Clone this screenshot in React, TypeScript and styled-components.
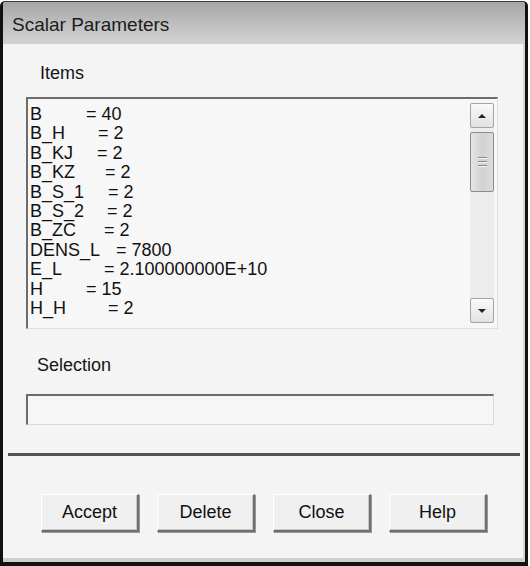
import React from "react";
import styled, { createGlobalStyle } from "styled-components";

const Global = createGlobalStyle`
  html, body { margin: 0; padding: 0; background: #ffffff; }
  body { font-family: "Liberation Sans", Arial, sans-serif; }
  * { box-sizing: border-box; }
`;

const Page = styled.div`
  width: 530px;
  height: 566px;
  padding: 1px 2px 0 0;
  background: #ffffff;
`;

const Window = styled.div`
  width: 528px;
  height: 565px;
  border-top: 1px solid #3a3a3a;
  border-left: 3px solid #111;
  border-right: 3px solid #111;
  border-bottom: 4px solid #111;
  border-top-left-radius: 5px;
  border-top-right-radius: 5px;
  display: flex;
  flex-direction: column;
  background: #f4f4f4;
  overflow: hidden;
  box-shadow: inset -2px 0 0 #d4d4d4, inset 0 -4px 0 #cfcfcf;
`;

const TitleBar = styled.div`
  height: 42px;
  flex: none;
  display: flex;
  align-items: center;
  padding: 3px 0 0 9px;
  background: linear-gradient(#a6a6a6, #c2c2c2 60%, #d2d2d2);
  font-size: 19px;
  color: #1c1c1c;
`;

const Body = styled.div`
  flex: 1;
  display: flex;
  flex-direction: column;
  padding: 0 3px 0 0;
`;

const Label = styled.div<{ $indent: number; $top: number }>`
  margin: ${(p) => p.$top}px 0 0 ${(p) => p.$indent}px;
  font-size: 18px;
  line-height: 20px;
  color: #151515;
`;

const ListBox = styled.div`
  margin: 14px 0 0 23px;
  width: 472px;
  height: 232px;
  display: flex;
  background: #f7f7f7;
  border-top: 2px solid #6c6c6c;
  border-left: 2px solid #6c6c6c;
  border-right: 1px solid #dedede;
  border-bottom: 1px solid #dedede;
`;

const Lines = styled.div`
  flex: 1;
  overflow: hidden;
  padding: 6px 0 0 2px;
`;

const Row = styled.div`
  display: flex;
  white-space: pre;
  font-size: 18px;
  line-height: 19.4px;
  height: 19.4px;
  color: #111;
`;

const Name = styled.span<{ $w: number }>`
  width: ${(p) => p.$w}px;
  flex: none;
`;

const ScrollBar = styled.div`
  width: 24px;
  flex: none;
  margin: 4px 3px 5px 0;
  display: flex;
  flex-direction: column;
  background: #ececec;
`;

const ArrowButton = styled.div`
  height: 25px;
  flex: none;
  border: 1px solid #a4a4a4;
  border-radius: 2px;
  background: linear-gradient(#fafafa, #e2e2e2);
  display: flex;
  align-items: center;
  justify-content: center;
`;

const Thumb = styled.div`
  height: 60px;
  flex: none;
  margin-top: 4px;
  border: 1px solid #8c8c8c;
  border-radius: 2px;
  background: linear-gradient(90deg, #e6e6e6, #d2d2d2 50%, #dcdcdc);
  display: flex;
  flex-direction: column;
  align-items: center;
  justify-content: center;
  gap: 2px;
`;

const Grip = styled.div`
  width: 9px;
  height: 2px;
  border-top: 1px solid #8a8a8a;
  border-bottom: 1px solid #f4f4f4;
`;

const Track = styled.div`
  flex: 1;
`;

const SelectionBox = styled.div`
  margin: 19px 0 0 23px;
  width: 468px;
  height: 31px;
  background: #f6f6f6;
  border-top: 2px solid #6c6c6c;
  border-left: 2px solid #6c6c6c;
  border-right: 1px solid #dadada;
  border-bottom: 1px solid #dadada;
`;

const Separator = styled.div`
  margin: 28px 2px 0 5px;
  height: 3px;
  background: #545454;
`;

const ButtonRow = styled.div`
  margin: 38px 0 0 38px;
  display: flex;
  gap: 18px;
`;

const Button = styled.div`
  width: 98px;
  height: 38px;
  display: flex;
  align-items: center;
  justify-content: center;
  font-size: 18px;
  color: #111;
  background: #f0f0f0;
  border-top: 1px solid #ffffff;
  border-left: 1px solid #ffffff;
  border-right: 2px solid #6e6e6e;
  border-bottom: 2px solid #6e6e6e;
  box-shadow: 1px 1px 0 #9a9a9a, inset -1px -1px 0 #c8c8c8;
`;

const rows: { name: string; eq: number; value: string }[] = [
  { name: "B", eq: 86, value: "40" },
  { name: "B_H", eq: 98, value: "2" },
  { name: "B_KJ", eq: 97, value: "2" },
  { name: "B_KZ", eq: 105, value: "2" },
  { name: "B_S_1", eq: 108, value: "2" },
  { name: "B_S_2", eq: 107, value: "2" },
  { name: "B_ZC", eq: 104, value: "2" },
  { name: "DENS_L", eq: 116, value: "7800" },
  { name: "E_L", eq: 104, value: "2.100000000E+10" },
  { name: "H", eq: 86, value: "15" },
  { name: "H_H", eq: 108, value: "2" },
];

const UpArrow = () => (
  <svg width="10" height="6" viewBox="0 0 10 6">
    <path d="M1 5 L5 1 L9 5 Z" fill="#222" />
  </svg>
);

const DownArrow = () => (
  <svg width="10" height="6" viewBox="0 0 10 6">
    <path d="M1 1 L5 5 L9 1 Z" fill="#222" />
  </svg>
);

export default function App() {
  return (
    <>
      <Global />
      <Page>
        <Window>
          <TitleBar>Scalar Parameters</TitleBar>
          <Body>
            <Label $indent={37} $top={19}>Items</Label>
            <ListBox>
              <Lines>
                {rows.map((r) => (
                  <Row key={r.name}>
                    <Name $w={r.eq - 30}>{r.name}</Name>
                    <span>= {r.value}</span>
                  </Row>
                ))}
              </Lines>
              <ScrollBar>
                <ArrowButton>
                  <UpArrow />
                </ArrowButton>
                <Thumb>
                  <Grip />
                  <Grip />
                  <Grip />
                </Thumb>
                <Track />
                <ArrowButton>
                  <DownArrow />
                </ArrowButton>
              </ScrollBar>
            </ListBox>
            <Label $indent={34} $top={26}>Selection</Label>
            <SelectionBox />
            <Separator />
            <ButtonRow>
              <Button>Accept</Button>
              <Button>Delete</Button>
              <Button>Close</Button>
              <Button>Help</Button>
            </ButtonRow>
          </Body>
        </Window>
      </Page>
    </>
  );
}
